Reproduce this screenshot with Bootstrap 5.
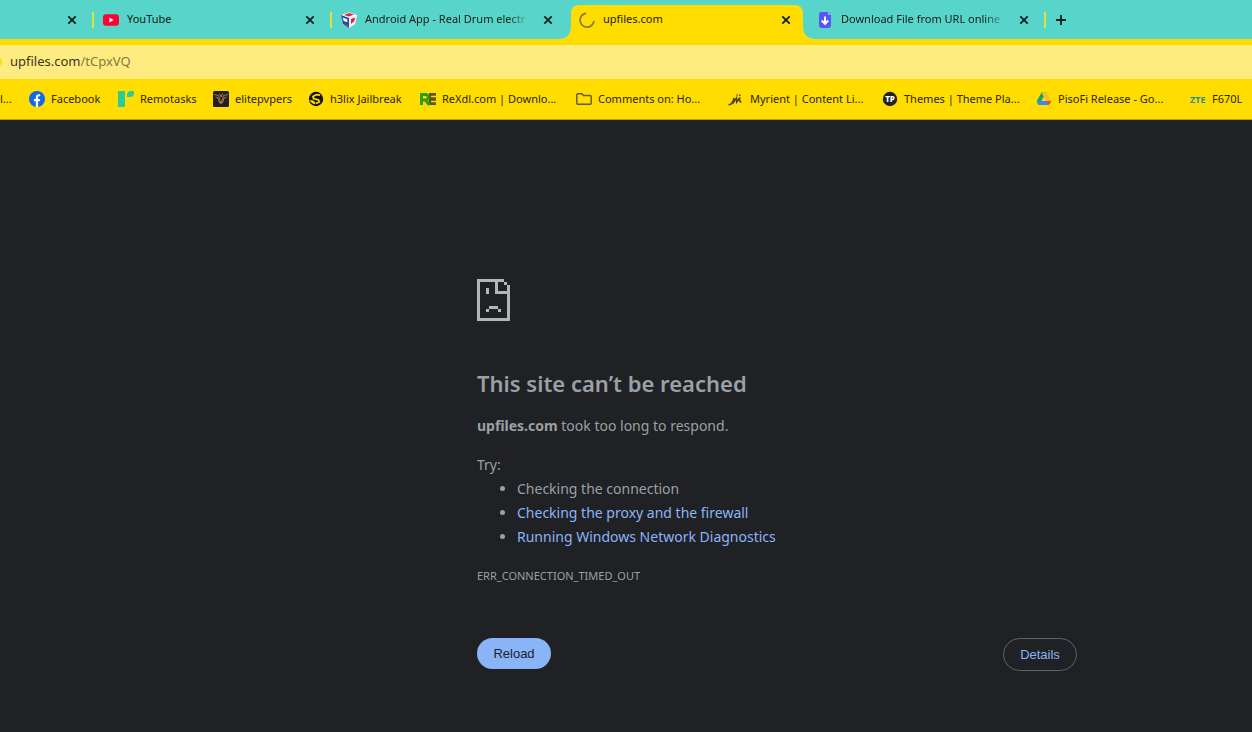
<!DOCTYPE html>
<html lang="en">
<head>
<meta charset="utf-8">
<meta name="viewport" content="width=device-width, initial-scale=1">
<title>upfiles.com</title>
<link href="https://cdn.jsdelivr.net/npm/bootstrap@5.3.0/dist/css/bootstrap.min.css" rel="stylesheet">
<style>
  body { background: #202124; font-family: "Noto Sans", "Open Sans", sans-serif; color: #9aa0a6; overflow-x: hidden; }
  svg { display: block; flex: none; }

  /* browser chrome */
  .chrome-top { background: #ffdd00; color: #1c1a10; }
  .tab-strip { background: #57d5cb; height: 39px; margin-bottom: 6px; }
  .tab-item { flex: 0 0 238px; min-width: 0; padding: 0 15px 0 11px; gap: 8px; font-size: 11px; position: relative; }
  .tab-item.tab-cut { flex-basis: 92px; padding-right: 15px; }
  .tab-item svg.favicon { width: 16px; height: 16px; }
  .tab-sep { width: 2px; height: 16px; background: #d9e339; flex: none; margin-right: -2px; }
  .tab-title { flex: 1; min-width: 0; overflow: hidden; white-space: nowrap; color: inherit; text-decoration: none; }
  .tab-fade { -webkit-mask-image: linear-gradient(90deg, #000 88%, transparent); mask-image: linear-gradient(90deg, #000 88%, transparent); }
  .icon-btn { border: 0; background: none; padding: 0; color: #10201e; }
  .close-btn { margin-left: 6px; }
  .tab-item.tab-active { align-self: stretch; margin: 5px 3px 0; flex-basis: 232px; padding: 0 12px 5px 8px; background: #ffdd00; border-radius: 8px 8px 0 0; }
  .tab-active::before, .tab-active::after { content: ""; position: absolute; bottom: 0; width: 10px; height: 10px; }
  .tab-active::before { left: -10px; background: radial-gradient(circle at 0 0, transparent 9px, #ffdd00 10px); }
  .tab-active::after { right: -10px; background: radial-gradient(circle at 100% 0, transparent 9px, #ffdd00 10px); }
  .new-tab { margin-left: 12px; }

  .omnibox { background: #ffec80; height: 34px; font-size: 13px; color: #3b3624; overflow: hidden; }
  .omni-dot { width: 10px; height: 10px; border-radius: 50%; background: #ffdd00; margin-left: -8px; margin-right: 8px; flex: none; }
  .omnibox .url-path { color: #837a45; }

  .bookmarks { height: 41px; font-size: 11px; border-bottom: 1px solid #b59f16; overflow: hidden; white-space: nowrap; }
  .bookmarks a { color: #2a2410; text-decoration: none; gap: 6px; flex: none; }
  .bm-cut { width: 29px; } .bm-s { width: 89px; } .bm-m { width: 95px; } .bm-l { width: 112px; } .bm-xl { width: 154px; }

  /* error page */
  .error-main { padding-left: 302px; padding-top: 159px; }
  .error-body { max-width: 600px; font-size: 14px; line-height: 24px; }
  .error-body h1 { font-size: 22px; line-height: 30px; font-weight: 600; margin: 47px 0 16px; }
  .error-body p { margin-bottom: 15px; }
  .error-body ul { padding-left: 40px; margin-bottom: 15px; }
  .error-body a { color: #8ab4f8; text-decoration: none; }
  .error-code { font-size: 11px; }
  .action-row { margin-top: 50px; }
  .action-row .btn { --bs-btn-font-family: "Liberation Sans", sans-serif; --bs-btn-font-size: 13px; --bs-btn-line-height: 15px; --bs-btn-padding-x: 16px; --bs-btn-padding-y: 8px; min-width: 74px; }
  .reload-btn { --bs-btn-bg: #8ab4f8; --bs-btn-color: #202124; --bs-btn-border-width: 0; --bs-btn-hover-bg: #9ec1fa; }
  .details-btn { --bs-btn-color: #8ab4f8; --bs-btn-border-color: #5f6368; --bs-btn-hover-color: #8ab4f8; --bs-btn-hover-border-color: #8ab4f8; }
</style>
</head>
<body>
<svg width="0" height="0" class="position-absolute" aria-hidden="true">
  <symbol id="x" viewBox="0 0 10 10"><path d="M1.3 1.3l7.4 7.4M8.7 1.3L1.3 8.7" stroke="currentColor" stroke-width="1.8"/></symbol>
</svg>
<header class="chrome-top">
  <nav class="tab-strip d-flex align-items-center" aria-label="Tabs">
    <div class="tab-item tab-cut d-flex align-items-center justify-content-end">
      <button class="icon-btn close-btn" aria-label="Close tab"><svg width="10" height="10"><use href="#x"/></svg></button>
    </div>
    <span class="tab-sep"></span>
    <div class="tab-item d-flex align-items-center">
      <svg class="favicon" viewBox="0 0 16 16"><rect y="2.3" width="16" height="11.4" rx="3" fill="#ff0033"/><path d="M6.4 5.6v4.8L10.6 8z" fill="#fff"/></svg>
      <a href="#" class="tab-title">YouTube</a>
      <button class="icon-btn close-btn" aria-label="Close tab"><svg width="10" height="10"><use href="#x"/></svg></button>
    </div>
    <span class="tab-sep"></span>
    <div class="tab-item d-flex align-items-center">
      <svg class="favicon" viewBox="0 0 16 16"><path d="M0 3l8-2.700L16 3l-2 9-6 4-6-4z" fill="#f4f4fa"/><path d="M0 3l8 3v10l-6-4z" fill="#1d4bb0"/><path d="M8 6l8-3-2 9-6 4z" fill="#eceef7"/><path d="M3 3l5-2 5 1.500-5 2z" fill="#d8283c"/><path d="M1.700 5.500l4.500 1.800.3 3-3.800-1.300z" fill="#fff"/><path d="M10 7l4-1.500-.6 3.500L10 12z" fill="#d8283c"/><path d="M3 11.500l4 1.500v2.200z" fill="#d8283c"/></svg>
      <a href="#" class="tab-title tab-fade">Android App - Real Drum electr</a>
      <button class="icon-btn close-btn" aria-label="Close tab"><svg width="10" height="10"><use href="#x"/></svg></button>
    </div>
    <div class="tab-item tab-active d-flex align-items-center">
      <svg class="favicon" viewBox="0 0 16 16"><path d="M7 1.200A7 7 0 1 0 15 9.200" fill="none" stroke="#8c8136" stroke-width="1.900"/></svg>
      <a href="#" class="tab-title">upfiles.com</a>
      <button class="icon-btn close-btn" aria-label="Close tab"><svg width="10" height="10"><use href="#x"/></svg></button>
    </div>
    <div class="tab-item d-flex align-items-center">
      <svg class="favicon" viewBox="0 0 16 16"><path d="M4 0h7l3 3v10a3 3 0 0 1-3 3H5a3 3 0 0 1-3-3V2a2 2 0 0 1 2-2z" fill="#5b55f2"/><path d="M11 0l3 3h-3z" fill="#a9a4ff"/><path d="M8 4.500v7M4.700 8.500L8 11.800l3.300-3.300" fill="none" stroke="#fff" stroke-width="1.900"/></svg>
      <a href="#" class="tab-title tab-fade">Download File from URL online</a>
      <button class="icon-btn close-btn" aria-label="Close tab"><svg width="10" height="10"><use href="#x"/></svg></button>
    </div>
    <span class="tab-sep"></span>
    <button class="icon-btn new-tab" aria-label="New tab"><svg width="10" height="10" viewBox="0 0 10 10"><path d="M5 0v10M0 5h10" stroke="currentColor" stroke-width="1.800"/></svg></button>
  </nav>

  <div class="omnibox d-flex align-items-center"><span class="omni-dot"></span><span>upfiles.com<span class="url-path">/tCpxVQ</span></span></div>

  <nav class="bookmarks d-flex align-items-center" aria-label="Bookmarks">
    <a href="#" class="bm-cut">l...</a>
    <a href="#" class="bm-s d-flex align-items-center"><svg width="16" height="16" viewBox="0 0 16 16"><circle cx="8" cy="8" r="8" fill="#1269e8"/><path d="M6.800 16V10.300H4.900V7.900h1.900V6.400c0-2.100 1.200-3.200 3-3.200.7 0 1.400.1 1.400.1v1.900h-1c-.8 0-1.100.5-1.100 1.100v1.600h2.100l-.4 2.400H9.100V16z" fill="#fff"/></svg><span>Facebook</span></a>
    <a href="#" class="bm-m d-flex align-items-center"><svg width="16" height="16" viewBox="0 0 16 16"><path d="M0 0h7v16H0z" fill="#2bcd94"/><path d="M9 6V4a4 4 0 0 1 4-4h3v2a4 4 0 0 1-4 4z" fill="#2bcd94"/></svg><span>Remotasks</span></a>
    <a href="#" class="bm-m d-flex align-items-center"><svg width="16" height="16" viewBox="0 0 16 16"><rect width="16" height="16" rx="1.500" fill="#221f1c"/><path d="M1 3.500l4.500 1L8 13l2.500-8.500 4.500-1M2.500 6l2.500 1L6.500 12M13.500 6L11 7 9.500 12M6.500 2.500L8 6l1.500-3.500" fill="none" stroke="#b98552" stroke-width=".9"/></svg><span>elitepvpers</span></a>
    <a href="#" class="bm-l d-flex align-items-center"><svg width="16" height="16" viewBox="0 0 16 16"><circle cx="8" cy="8" r="7.200" fill="#151515"/><path d="M12 4.200L8.500 3.600 5 5.500l.5 2L10.500 9l.8 1.800L8 12.500" fill="none" stroke="#ffdd00" stroke-width="1.700"/><path d="M1 9l4 .5 2.500 2L7 13.500 4 12z" fill="#ffdd00"/></svg><span>h3lix Jailbreak</span></a>
    <a href="#" class="bm-xl d-flex align-items-center"><svg width="16" height="16" viewBox="0 0 16 16"><path d="M9 2h7v12H9z" fill="#5e5122"/><path d="M11 5.500h5M11 10.500h5" stroke="#ffdd00" stroke-width="1.300"/><path d="M1.500 14V3.500h4a2.700 2.700 0 0 1 0 5.500H2M5.500 9l4 5" fill="none" stroke="#2f9b16" stroke-width="3"/></svg><span>ReXdl.com | Downlo...</span></a>
    <a href="#" class="bm-xl d-flex align-items-center"><svg width="18" height="16" viewBox="0 0 18 16"><path d="M2.800 3.800a1 1 0 0 1 1-1h4l1.700 1.700h6.700a1 1 0 0 1 1 1v6.700a1 1 0 0 1-1 1H3.800a1 1 0 0 1-1-1z" fill="none" stroke="#5f5a33" stroke-width="1.400"/></svg><span>Comments on: Ho...</span></a>
    <a href="#" class="bm-xl d-flex align-items-center"><svg width="16" height="16" viewBox="0 0 16 16"><path d="M.5 13.700c3.500.3 4.700-2.700 5.500-6.700l-.3 4L8.500 7l.2 4L12 6.500c-.8 2.500-.6 4.500 1.500 4.500M8.700 4.500l.5-1M11.500 5l.6-1.500" fill="none" stroke="#4b4520" stroke-width="1.500"/></svg><span>Myrient | Content Li...</span></a>
    <a href="#" class="bm-xl d-flex align-items-center"><svg width="16" height="16" viewBox="0 0 16 16"><circle cx="8" cy="8" r="7.200" fill="#222"/><text x="8" y="11" text-anchor="middle" font-size="8" font-weight="800" fill="#fff">TP</text></svg><span>Themes | Theme Pla...</span></a>
    <a href="#" class="bm-xl d-flex align-items-center"><svg width="16" height="16" viewBox="0 0 16 16"><path d="M5.500 1.500h5L5 11l-2.500 3L.8 10z" fill="#1fa463"/><path d="M5.500 1.500h5l4.700 8.500h-5z" fill="#fbbc2c"/><path d="M3.500 10h11.700l-2.500 4H2.500L.8 10.500z" fill="#4285f4"/><path d="M10.500 10h4.700l-2.500 4z" fill="#ea4335"/><path d="M8 5.500l2.300 4.500H5.500z" fill="#ffdd00"/></svg><span>PisoFi Release - Go...</span></a>
    <a href="#" class="d-flex align-items-center"><svg width="16" height="16" viewBox="0 0 16 16"><text x="0" y="12" font-size="9" font-weight="700" fill="#2a8f8a">ZTE</text></svg><span>F670L</span></a>
  </nav>
</header>

<main class="error-main">
  <div class="error-body mx-auto">
    <svg width="33" height="42" viewBox="0 0 11 14" shape-rendering="crispEdges" fill="#b4b5b7" role="img" aria-label="Sad page"><path d="M0 0h9v1h1v1h1v12H0zM1 1v12h9V5H6V1zM7 1v3h3V2H9V1z" fill-rule="evenodd"/><path d="M3 3h1v2H3zM4 9h3v1H4zM3 10h1v1H3zM7 10h1v1H7z"/></svg>
    <h1>This site can’t be reached</h1>
    <p><strong>upfiles.com</strong> took too long to respond.</p>
    <div>Try:</div>
    <ul>
      <li>Checking the connection</li>
      <li><a href="#">Checking the proxy and the firewall</a></li>
      <li><a href="#">Running Windows Network Diagnostics</a></li>
    </ul>
    <div class="error-code">ERR_CONNECTION_TIMED_OUT</div>
    <div class="action-row d-flex justify-content-between align-items-start">
      <button class="btn rounded-pill reload-btn">Reload</button>
      <button class="btn rounded-pill details-btn">Details</button>
    </div>
  </div>
</main>
<script src="https://cdn.jsdelivr.net/npm/bootstrap@5.3.0/dist/js/bootstrap.bundle.min.js"></script>
</body>
</html>
